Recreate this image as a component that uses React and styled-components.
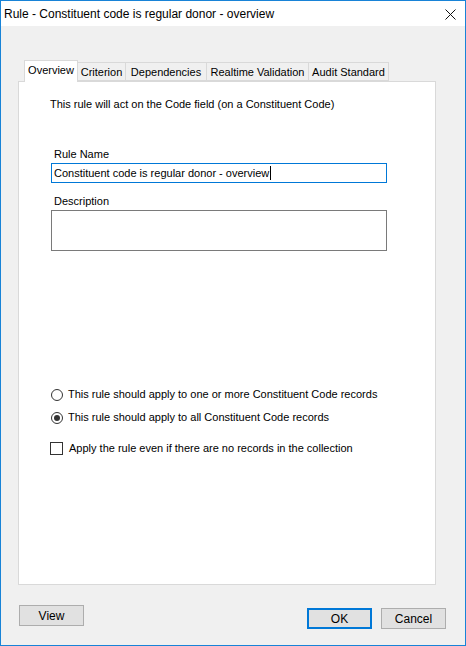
import styled, { createGlobalStyle } from "styled-components";

const Global = createGlobalStyle`
  html, body { margin: 0; padding: 0; background: #f0f0f0; }
  * { box-sizing: border-box; }
`;

const tabs = [
  { label: "Overview", w: 54, active: true },
  { label: "Criterion", w: 48 },
  { label: "Dependencies", w: 81 },
  { label: "Realtime Validation", w: 102 },
  { label: "Audit Standard", w: 80 },
];

function App() {
  return (
    <>
      <Global />
      <Window>
        <TitleBar>
          <Title>Rule - Constituent code is regular donor - overview</Title>
          <Close>
            <svg width="11" height="11" viewBox="0 0 11 11">
              <path d="M0.5 0.5 L10.5 10.5 M10.5 0.5 L0.5 10.5" stroke="#111" strokeWidth="1" />
            </svg>
          </Close>
        </TitleBar>
        <Body>
          <TabStrip>
            {tabs.map((t) => (
              <Tab key={t.label} $w={t.w} $active={t.active}>{t.label}</Tab>
            ))}
          </TabStrip>
          <Panel>
            <Intro>This rule will act on the Code field (on a Constituent Code)</Intro>
            <Field $gap={12}>
              <Label>Rule Name</Label>
              <TextBox $focused>
                Constituent code is regular donor - overview<Caret />
              </TextBox>
            </Field>
            <Field>
              <Label>Description</Label>
              <TextArea />
            </Field>
            <Options>
              <Option>
                <Radio />
                This rule should apply to one or more Constituent Code records
              </Option>
              <Option>
                <Radio $checked />
                This rule should apply to all Constituent Code records
              </Option>
              <CheckOption>
                <Check />
                Apply the rule even if there are no records in the collection
              </CheckOption>
            </Options>
          </Panel>
          <Footer>
            <Button>View</Button>
            <Right>
              <Button $default>OK</Button>
              <Button>Cancel</Button>
            </Right>
          </Footer>
        </Body>
      </Window>
    </>
  );
}

const Window = styled.div`
  width: 466px;
  height: 646px;
  border: 1px solid #1883d7;
  background: #f0f0f0;
  display: flex;
  flex-direction: column;
  font-family: "Liberation Sans", Arial, sans-serif;
  font-size: 11px;
  color: #000;
`;

const TitleBar = styled.div`
  height: 25px;
  background: #fff;
  display: flex;
  align-items: center;
  justify-content: space-between;
  padding: 0 9px 0 3px;
`;

const Title = styled.div`
  font-size: 12px;
  color: #000;
  padding-top: 1px;
`;

const Close = styled.div`
  display: flex;
  align-items: center;
  padding-top: 1px;
`;

const Body = styled.div`
  flex: 1;
  display: flex;
  flex-direction: column;
  padding: 34px 29px 0 17px;
`;

const TabStrip = styled.div`
  display: flex;
  align-items: flex-end;
  height: 21px;
  padding-left: 6px;
  position: relative;
  z-index: 1;
`;

const Tab = styled.div`
  width: ${(p) => p.$w}px;
  height: ${(p) => (p.$active ? 22 : 19)}px;
  margin-bottom: ${(p) => (p.$active ? -1 : 0)}px;
  background: ${(p) => (p.$active ? "#fff" : "#f0f0f0")};
  border: 1px solid #d9d9d9;
  border-bottom: ${(p) => (p.$active ? "none" : "1px solid #d9d9d9")};
  border-left: ${(p) => (p.$active ? "1px solid #d9d9d9" : "none")};
  display: flex;
  justify-content: center;
  padding-top: 3px;
  white-space: nowrap;
  &:nth-child(2) { border-left: none; }
`;

const Panel = styled.div`
  width: 418px;
  height: 504px;
  background: #fff;
  border: 1px solid #d9d9d9;
  padding: 16px 0 0 31px;
  display: flex;
  flex-direction: column;
`;

const Intro = styled.div`
  height: 13px;
  line-height: 13px;
  margin-bottom: 37px;
`;

const Field = styled.div`
  display: flex;
  flex-direction: column;
  margin-left: 1px;
  margin-bottom: ${(p) => p.$gap ?? 11}px;
`;

const Label = styled.div`
  line-height: 13px;
  margin-left: 3px;
  margin-bottom: 2px;
`;

const TextBox = styled.div`
  width: 336px;
  height: 20px;
  border: 1px solid ${(p) => (p.$focused ? "#0078d7" : "#7a7a7a")};
  background: #fff;
  padding: 2px 0 0 2px;
  line-height: 14px;
  display: flex;
  align-items: flex-start;
  white-space: nowrap;
`;

const Caret = styled.span`
  display: inline-block;
  width: 1px;
  height: 14px;
  background: #000;
  margin-left: 1px;
`;

const TextArea = styled.div`
  width: 336px;
  height: 41px;
  border: 1px solid #7a7a7a;
  background: #fff;
`;

const Options = styled.div`
  display: flex;
  flex-direction: column;
  margin-top: 121px;
  margin-left: 1px;
`;

const Option = styled.div`
  display: flex;
  align-items: center;
  gap: 5px;
  height: 23px;
  line-height: 13px;
`;

const CheckOption = styled(Option)`
  margin-top: 8px;
  margin-left: -1px;
  gap: 6px;
`;

const Radio = styled.span`
  width: 12px;
  height: 12px;
  border-radius: 50%;
  border: 1px solid #333;
  background: #fff;
  display: flex;
  align-items: center;
  justify-content: center;
  &::after {
    content: "";
    display: ${(p) => (p.$checked ? "block" : "none")};
    width: 6px;
    height: 6px;
    border-radius: 50%;
    background: #333;
  }
`;

const Check = styled.span`
  width: 13px;
  height: 13px;
  border: 1px solid #333;
  background: #fff;
`;

const Footer = styled.div`
  display: flex;
  justify-content: space-between;
  align-items: flex-start;
  margin-top: 20px;
  padding-left: 1px;
`;

const Right = styled.div`
  display: flex;
  gap: 9px;
  margin-top: 3px;
  margin-right: -10px;
`;

const Button = styled.div`
  width: 65px;
  height: 21px;
  background: #e1e1e1;
  border: ${(p) => (p.$default ? "2px solid #0078d7" : "1px solid #adadad")};
  display: flex;
  align-items: center;
  justify-content: center;
  font-size: 12px;
`;

export default App;
